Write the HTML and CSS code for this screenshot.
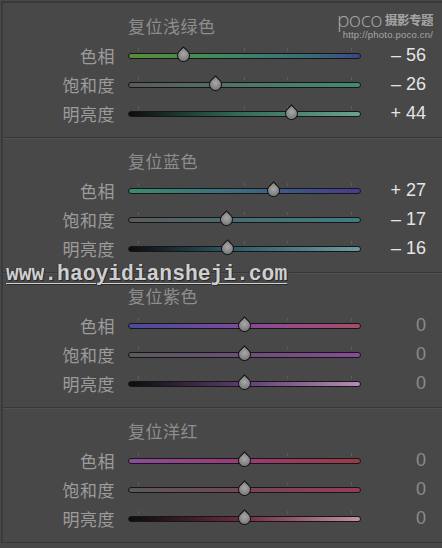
FILE: index.html
```html
<!doctype html>
<html lang="zh-CN">
<head>
    <meta charset="UTF-8">
    <title>HSL 面板</title>
    <link rel="stylesheet" href="styles.css">
</head>
<body>
<div class="panel">
    <div class="poco">
        <span class="poco-word">poco</span>
        <span class="poco-cn">摄影专题</span>
        <span class="poco-url">http://photo.poco.cn/</span>
    </div>

    <div class="group">
        <div class="title">复位浅绿色</div>
        <div class="row">
            <span class="label">色相</span>
            <div class="track aqua-hue"><i class="thumb" style="left: 23.6%"></i></div>
            <span class="value">– 56</span>
        </div>
        <div class="row">
            <span class="label">饱和度</span>
            <div class="track aqua-sat"><i class="thumb" style="left: 37.8%"></i></div>
            <span class="value">– 26</span>
        </div>
        <div class="row">
            <span class="label">明亮度</span>
            <div class="track aqua-lum"><i class="thumb" style="left: 70.4%"></i></div>
            <span class="value">+ 44</span>
        </div>
    </div>

    <div class="group">
        <div class="title">复位蓝色</div>
        <div class="row">
            <span class="label">色相</span>
            <div class="track blue-hue"><i class="thumb" style="left: 62.7%"></i></div>
            <span class="value">+ 27</span>
        </div>
        <div class="row">
            <span class="label">饱和度</span>
            <div class="track blue-sat"><i class="thumb" style="left: 42.5%"></i></div>
            <span class="value">– 17</span>
        </div>
        <div class="row">
            <span class="label">明亮度</span>
            <div class="track blue-lum"><i class="thumb" style="left: 42.9%"></i></div>
            <span class="value">– 16</span>
        </div>
    </div>

    <div class="group">
        <div class="title">复位紫色</div>
        <div class="row">
            <span class="label">色相</span>
            <div class="track purple-hue"><i class="thumb" style="left: 50.2%"></i></div>
            <span class="value zero">0</span>
        </div>
        <div class="row">
            <span class="label">饱和度</span>
            <div class="track purple-sat"><i class="thumb" style="left: 50.2%"></i></div>
            <span class="value zero">0</span>
        </div>
        <div class="row">
            <span class="label">明亮度</span>
            <div class="track purple-lum"><i class="thumb" style="left: 50.2%"></i></div>
            <span class="value zero">0</span>
        </div>
    </div>

    <div class="group">
        <div class="title">复位洋红</div>
        <div class="row">
            <span class="label">色相</span>
            <div class="track magenta-hue"><i class="thumb" style="left: 50.2%"></i></div>
            <span class="value zero">0</span>
        </div>
        <div class="row">
            <span class="label">饱和度</span>
            <div class="track magenta-sat"><i class="thumb" style="left: 50.2%"></i></div>
            <span class="value zero">0</span>
        </div>
        <div class="row">
            <span class="label">明亮度</span>
            <div class="track magenta-lum"><i class="thumb" style="left: 50.2%"></i></div>
            <span class="value zero">0</span>
        </div>
    </div>

    <div class="site-mark">www.haoyidiansheji.com</div>
</div>
</body>
</html>
```

FILE: styles.css
```css
html, body {
    margin: 0;
    width: 442px;
    height: 548px;
    overflow: hidden;
    background-color: #484848;
}

.panel {
    position: relative;
    margin: 1px 0 0 1px;
    border-top: 2px solid #383838;
    border-left: 2px solid #3b3b3b;
    font-family: "Noto Sans CJK SC", "Liberation Sans", sans-serif;
}

.group {
    padding: 12px 0 9px;
    border-bottom: 1px solid #383838;
}

.group + .group {
    border-top: 1px solid #515151;
    padding-top: 11px;
}

.group:last-of-type {
    border-bottom: 3px solid #141414;
}

.title {
    height: 22px;
    line-height: 22px;
    margin-bottom: 4px;
    padding-left: 125px;
    font-size: 17px;
    letter-spacing: 0.5px;
    color: #8e8e8e;
}

.row {
    display: grid;
    grid-template-columns: 112px 233px 52px;
    column-gap: 13px;
    align-items: center;
    height: 29px;
}

.label {
    text-align: right;
    font-size: 17px;
    letter-spacing: 0.5px;
    color: #9c9c9c;
}

.value {
    text-align: right;
    font-family: "Liberation Sans", sans-serif;
    font-size: 18px;
    color: #e4e4e4;
}

.value.zero {
    color: #8a8a8a;
}

/* 滑块轨道 */
.track {
    position: relative;
    height: 4px;
    border: 1px solid #161616;
    border-radius: 4px;
}

.track::before {
    content: "";
    position: absolute;
    left: 0;
    right: 0;
    top: -6px;
    height: 3px;
    background: linear-gradient(90deg,
        transparent 9px, #5e5e5e 9px 10px,
        transparent 10px 115px, #5e5e5e 115px 116px,
        transparent 116px 158px, #5a5a5a 158px 159px,
        transparent 159px 222px, #5e5e5e 222px 223px,
        transparent 223px);
}

.thumb {
    position: absolute;
    top: -5px;
    width: 11px;
    height: 11px;
    margin-left: -7px;
    border: 1.5px solid #111;
    border-radius: 0 50% 50% 50%;
    transform: rotate(45deg);
    background: radial-gradient(circle at 40% 40%, #a8a8a8, #7c7c7c 70%, #6a6a6a);
}

.aqua-hue { background: linear-gradient(90deg, #5a8c38, #3f8a62 40%, #3a6f78 75%, #3c4785); }
.aqua-sat { background: linear-gradient(90deg, #5a5a5a, #4f7466 45%, #3f8c74); }
.aqua-lum { background: linear-gradient(90deg, #0c0c0c, #2f6656 45%, #6aa38f); }

.blue-hue { background: linear-gradient(90deg, #3b8a6e, #3b6f80 45%, #3c5186 75%, #4b3a8c); }
.blue-sat { background: linear-gradient(90deg, #5a5a5a, #4a6c72 45%, #3e7d85); }
.blue-lum { background: linear-gradient(90deg, #0c0c0c, #2d5b68 45%, #6b9ca3); }

.purple-hue { background: linear-gradient(90deg, #4a4a9a, #7a4a9c 45%, #9a4a8a 70%, #a44c68); }
.purple-sat { background: linear-gradient(90deg, #5a5a5a, #6a4e78 48%, #8a4a9a); }
.purple-lum { background: linear-gradient(90deg, #0c0c0c, #5e3a6e 48%, #b48cb4); }

.magenta-hue { background: linear-gradient(90deg, #8a4c9a, #983c78 45%, #9a3a5a 75%, #9a3a46); }
.magenta-sat { background: linear-gradient(90deg, #5a5a5a, #744656 48%, #9a3a5c); }
.magenta-lum { background: linear-gradient(90deg, #0c0c0c, #6a2a40 48%, #c490a2); }

/* 水印 */
.poco {
    position: absolute;
    top: 8px;
    right: 9px;
    display: grid;
    grid-template-columns: auto auto;
    column-gap: 3px;
    align-items: end;
    color: #a6a6a6;
}

.poco-word {
    font-family: "Open Sans", sans-serif;
    font-size: 21px;
    font-weight: 300;
    line-height: 17px;
    letter-spacing: -0.5px;
}

.poco-cn {
    font-size: 12.5px;
    font-weight: 700;
    line-height: 14px;
    letter-spacing: -0.5px;
    padding-bottom: 1px;
}

.poco-url {
    grid-column: 1 / 3;
    justify-self: end;
    margin-top: 2px;
    font-family: "Liberation Sans", sans-serif;
    font-size: 9.5px;
    line-height: 10px;
    letter-spacing: 0.2px;
}

.site-mark {
    position: absolute;
    left: 3px;
    top: 261px;
    font-family: "Liberation Mono", monospace;
    font-size: 21.3px;
    font-weight: 700;
    line-height: 20px;
    color: #cfcfcf;
    text-decoration: underline;
    text-decoration-thickness: 1px;
    text-underline-offset: 3px;
    text-shadow: 1px 1px 0 #2a2a2a, -1px 0 0 #333;
}
```
